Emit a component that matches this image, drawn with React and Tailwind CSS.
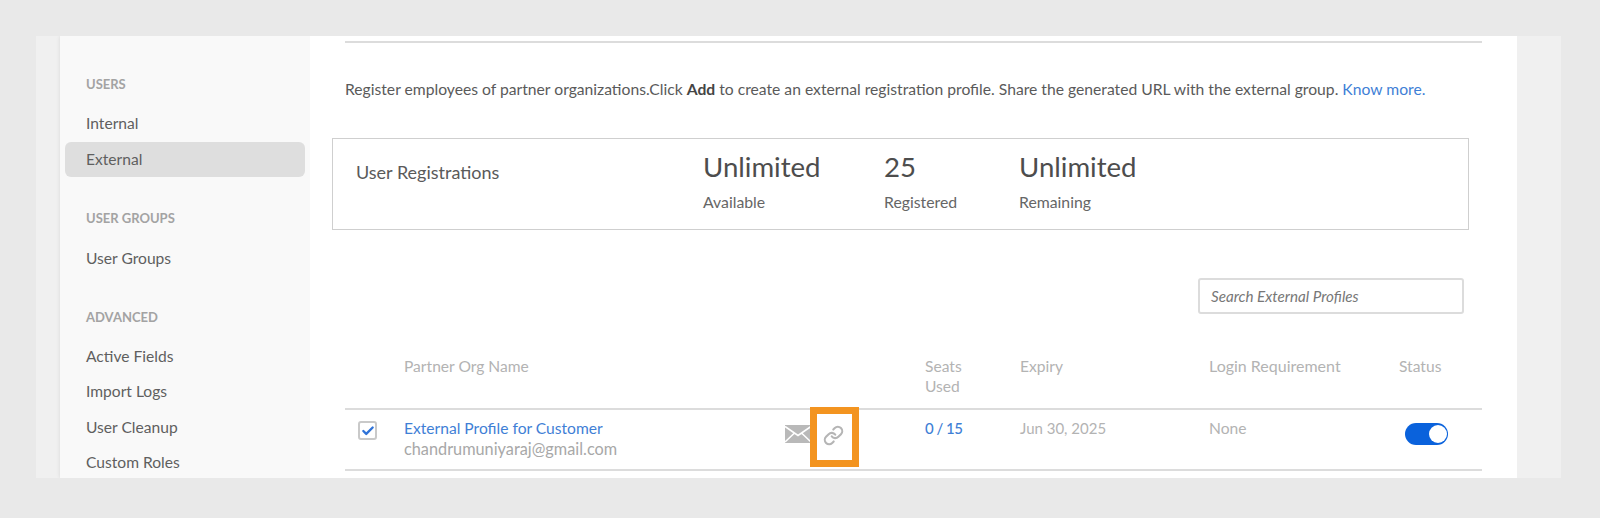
import React from "react";
import { Link, Check } from "lucide-react";

const Title = ({ children, className = "" }) => (
  <div className={`px-[26px] h-5 leading-5 text-[13px] font-bold text-[#a3a3a3] ${className}`}>{children}</div>
);

const Item = ({ children, active }) => (
  <div
    className={`mx-[5px] px-[21px] h-[35.5px] leading-[35.5px] text-[15.6px] text-[#5f5f5f] rounded-md ${
      active ? "bg-[#dedede]" : ""
    }`}
  >
    {children}
  </div>
);

const Stat = ({ value, label, className }) => (
  <div className={className}>
    <div className="text-[27.6px] leading-[34px] text-[#4d4d4d]">{value}</div>
    <div className="mt-2 text-[15.8px] leading-5 text-[#666]">{label}</div>
  </div>
);

export default function App() {
  return (
    <div className="h-[518px] bg-[#e9e9e9] pt-9 pl-9 pr-[39px] font-['Lato',sans-serif]">
      <div className="flex h-[442px] overflow-hidden bg-[#f0f0f0]">
        <div className="ml-6 w-[250px] shrink-0 bg-[#f9f9f9] pt-[38px] shadow-[0_0_4px_rgba(0,0,0,0.1)]">
          <Title>USERS</Title>
          <div className="mt-3">
            <Item>Internal</Item>
            <Item active>External</Item>
          </div>
          <Title className="mt-[31px]">USER GROUPS</Title>
          <div className="mt-[13px]">
            <Item>User Groups</Item>
          </div>
          <Title className="mt-[30px]">ADVANCED</Title>
          <div className="mt-3">
            <Item>Active Fields</Item>
            <Item>Import Logs</Item>
            <Item>User Cleanup</Item>
            <Item>Custom Roles</Item>
          </div>
        </div>

        <div className="w-[1207px] shrink-0 bg-white px-[35px] pt-[5px]">
          <div className="h-[2px] bg-[#dcdcdc]" />
          <p className="mt-[34px] h-6 leading-6 text-[15.68px] text-[#5a5a5a] whitespace-nowrap">
            Register employees of partner organizations.Click <b className="text-[#444]">Add</b> to create an external
            registration profile. Share the generated URL with the external group.{" "}
            <a className="text-[#3f7fd6]" href="#">
              Know more.
            </a>
          </p>

          <div className="mt-[37px] ml-[-13px] mr-[13px] h-[92px] flex border border-[#cfcfcf] pt-[11px]">
            <div className="ml-[23px] w-[347px] mt-[10px] text-[18px] leading-6 text-[#5a5a5a]">User Registrations</div>
            <Stat value="Unlimited" label="Available" className="w-[181px]" />
            <Stat value="25" label="Registered" className="w-[135px]" />
            <Stat value="Unlimited" label="Remaining" />
          </div>

          <div className="mt-[48px] flex justify-end mr-[18px]">
            <div className="w-[266px] h-9 leading-8 pl-[11px] border-2 border-[#dcdcdc] rounded-[3px] text-[15.2px] italic text-[#777]">
              Search External Profiles
            </div>
          </div>

          <div className="mt-[42px] h-[54px] flex border-b-2 border-[#dcdcdc] text-[15.6px] leading-5 text-[#b3b3b3]">
            <div className="w-[59px]" />
            <div className="w-[521px]">Partner Org Name</div>
            <div className="w-[95px]">
              Seats
              <br />
              Used
            </div>
            <div className="w-[189px]">Expiry</div>
            <div className="w-[190px] text-[16px]">Login Requirement</div>
            <div>Status</div>
          </div>

          <div className="h-[61px] flex border-b-2 border-[#dcdcdc] text-[15px] text-[#b3b3b3]">
            <div className="w-[59px] pl-[13px] pt-[11px]">
              <div className="w-[19px] h-[19px] flex items-center justify-center rounded-[3px] border-2 border-[#c9c9c9]">
                <Check size={14} strokeWidth={4} className="text-[#2f73d8]" />
              </div>
            </div>
            <div className="w-[521px] flex pr-[81px]">
              <div className="pt-2">
                <div className="leading-5 text-[15.6px] text-[#3f7fd6]">External Profile for Customer</div>
                <div className="mt-px leading-5 text-[16.3px] text-[#a8a8a8]">chandrumuniyaraj@gmail.com</div>
              </div>
              <div className="ml-auto flex pt-[15px]">
                <svg width="26" height="18" viewBox="0 0 26 18" className="mr-3">
                  <rect width="26" height="18" fill="#b9b9b9" />
                  <path d="M0 1.5 13 10.5 26 1.5M0 17 9.5 8M26 17 16.5 8" fill="none" stroke="#fff" strokeWidth="1.6" />
                </svg>
                <div className="relative h-[21px] w-[21px]">
                  <Link size={21} strokeWidth={2.4} className="text-[#b5b5b5]" />
                  <div className="absolute left-[-13px] top-[-18px] w-[49px] h-[60px] border-[7px] border-[#f39420]" />
                </div>
              </div>
            </div>
            <div className="w-[95px] pt-2 leading-5 text-[15px] font-medium tracking-[-0.5px] text-[#3f7fd6]">0 / 15</div>
            <div className="w-[189px] pt-2 leading-5">Jun 30, 2025</div>
            <div className="w-[190px] pt-2 leading-5 text-[15.6px]">None</div>
            <div className="pl-[6px] pt-[13px]">
              <div className="w-[43px] h-[22px] flex items-center justify-end pr-px rounded-full bg-[#0a62dc]">
                <div className="w-[18px] h-[18px] rounded-full bg-white" />
              </div>
            </div>
          </div>
        </div>

        <div className="flex-1" />
      </div>
    </div>
  );
}
